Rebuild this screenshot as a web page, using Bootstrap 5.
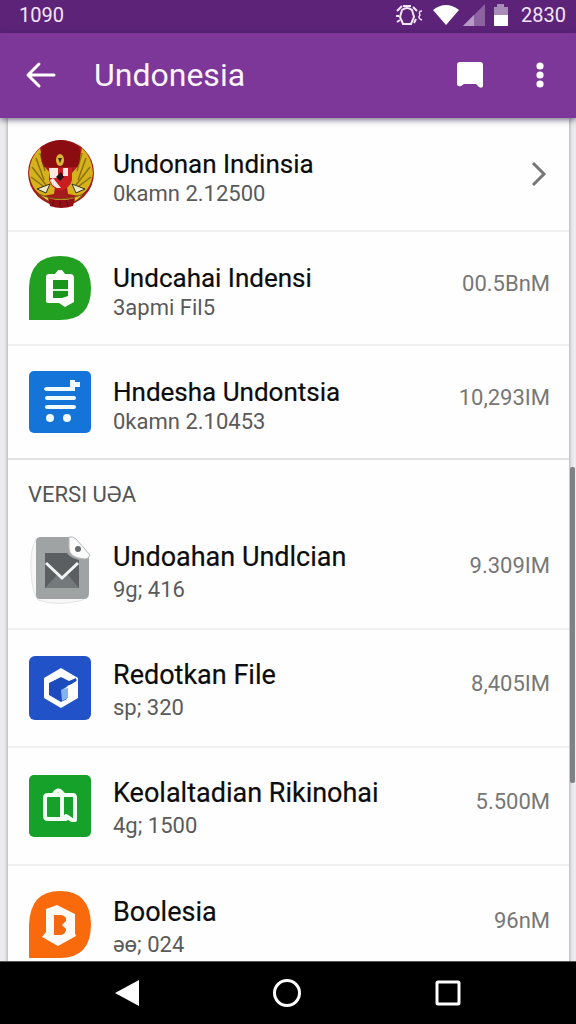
<!DOCTYPE html>
<html lang="id">
<head>
<meta charset="utf-8">
<meta name="viewport" content="width=device-width, initial-scale=1">
<title>Undonesia</title>
<link href="https://cdn.jsdelivr.net/npm/bootstrap@5.3.0/dist/css/bootstrap.min.css" rel="stylesheet">
<style>
  body { font-family: Roboto, "Liberation Sans", sans-serif; background: #ececee; color: #0c0c0c; }
  svg { display: block; flex: none; }
  .status-strip { background: #5c2379; height: 33px; font-size: 20px; line-height: 30px; color: #f3e6f8; padding: 0 10px 3px 19px; }
  .app-header { background: #7c3798; height: 85px; padding: 0 20px 2px 24px; box-shadow: 0 2px 6px rgba(30, 20, 60, .6); z-index: 2; }
  .app-header h1 { font-size: 32px; line-height: 40px; font-weight: 400; margin: 0 0 0 36px; color: #fbf3fd; }
  .bare-btn { background: none; border: 0; padding: 0; color: #fff; }
  .header-actions { gap: 40px; }
  .scroll-area { min-height: 0; padding: 0 7px 0 8px; }
  .sheet { background: #fefefe; box-shadow: 0 0 4px rgba(0, 0, 0, .4); min-height: 100%; }
  .file-row { display: flex; align-items: center; height: 114px; padding: 0 19px 0 20px; border-bottom: 2px solid #f0f0f0; color: inherit; text-decoration: none; }
  .group-end { border-bottom-color: #e2e2e2; }
  .lower .file-row { height: 118px; }
  .tile { width: 64px; margin-right: 21px; }
  .file-text { padding-top: 10px; }
  .file-name { font-size: 26px; line-height: 30px; -webkit-text-stroke: .2px; }
  .lower .file-name { font-size: 27px; }
  .file-note { font-size: 22px; line-height: 30px; color: #5a5a5a; }
  .lower .file-note { line-height: 36px; }
  .file-size { font-size: 22px; line-height: 30px; color: #777; padding-bottom: 8px; }
  .group-title { font-size: 22px; line-height: 30px; font-weight: 400; color: #555; margin: 0; padding: 20px 20px 2px; }
  .thumb { right: 1px; top: 41.4%; height: 37.5%; width: 5px; background: #808182; border-radius: 2px; }
  .soft-keys { background: #000; height: 63px; padding: 0 48px; border-top: 1px solid #555; z-index: 2; }
</style>
</head>
<body>
<div class="d-flex flex-column vh-100 overflow-hidden">
  <div class="status-strip d-flex align-items-center flex-shrink-0">
    <span class="me-auto">1090</span>
    <svg width="30" height="26" viewBox="0 0 30 26" fill="none" stroke="#f3e6f8" stroke-width="2"><path d="M7 8q5-4 10 0l2 7-3 7H8l-3-7z"/><path d="M2 9l5-5M18 5l4 4M1 14h3M2 20l3-2M8 4h8M19 21l2-4"/><path d="M27 9q-4 0-2 4-3 3 2 5" stroke-width="1.500"/></svg>
    <svg class="ms-2 me-1" width="26" height="22" viewBox="0 0 26 22"><path d="M0 6Q13-4 26 6L13 21z" fill="#fff"/></svg>
    <svg width="22" height="22" viewBox="0 0 22 22"><path d="M0 22L22 0v22z" fill="#8c62a1"/><path d="M0 22L11 11v11z" fill="#b79ac5"/></svg>
    <svg class="mx-2" width="16" height="22" viewBox="0 0 16 22"><path d="M4 0h7v3h4v8H1V3h3z" fill="#a98bb8"/><path d="M1 11h14v11H1z" fill="#fff"/></svg>
    <span class="ms-1">2830</span>
  </div>
  <header class="app-header d-flex align-items-center flex-shrink-0 position-relative">
    <button class="bare-btn" type="button" aria-label="Kembali"><svg width="34" height="32" viewBox="0 0 34 32" fill="none" stroke="#fff" stroke-width="3" stroke-linecap="round" stroke-linejoin="round"><path d="M30 16H4M15 5L4 16l11 11"/></svg></button>
    <h1 class="flex-grow-1">Undonesia</h1>
    <div class="header-actions d-flex align-items-center">
      <button class="bare-btn" type="button" aria-label="Pesan"><svg width="28" height="28" viewBox="0 0 28 28"><path d="M4 1h20q3 0 3 3v21q-1 3-4 1l-3-3H8l-3 2q-4 1-4-2V4q0-3 3-3z" fill="#fff"/></svg></button>
      <button class="bare-btn" type="button" aria-label="Menu"><svg width="32" height="28" viewBox="0 0 32 28" fill="#fff"><circle cx="16" cy="5" r="3.600"/><circle cx="16" cy="14" r="3.600"/><circle cx="16" cy="23" r="3.600"/></svg></button>
    </div>
  </header>

  <main class="scroll-area flex-grow-1 position-relative">
    <div class="sheet">
      <a class="file-row" href="#">
        <span class="tile"><svg width="66" height="70" viewBox="0 0 66 70">
          <ellipse cx="33" cy="34" rx="33" ry="33" fill="#a51a1a"/>
          <path d="M12 9Q2 18 1 34q2 17 14 23l11-2 2-14-12-14zM54 9q10 9 11 25-2 17-14 23l-11-2-2-14 12-14z" fill="#d5b21b"/>
          <path d="M8 19l8 22M4 28l14 18M3 38l16 12M58 19l-8 22M62 28L48 46M63 38L47 50M12 14l5 18M54 14l-5 18" stroke="#8d7110" stroke-width="1.500" fill="none"/>
          <path d="M14 8Q33-6 51 8q3 12-2 20H16Q11 19 14 8z" fill="#8b0d12"/>
          <ellipse cx="32" cy="21" rx="4" ry="6" fill="#d8b834"/><path d="M30 19h4l-2 5z" fill="#3b2a10"/>
          <path d="M21 29h23v12q-2 8-11 11-10-3-12-11z" fill="#c91d22"/>
          <path d="M21 29h9v10h-8zM35 29h5v8h-5zM25 39l8 10h-4q-6-3-7-8z" fill="#f7e9e2"/>
          <path d="M28 38l5-5 3 5-4 4z" fill="#251015"/>
          <path d="M9 50l13-5-4 9zM57 50l-13-5 4 9z" fill="#efe9c5" stroke="#3a3212"/>
          <path d="M10 55q23 10 46 0l-8 7H20z" fill="#e3c53c" stroke="#71500e"/>
          <path d="M20 59q13 4 27 0l-2 8q-12 4-23 0z" fill="#951016"/>
          <path d="M26 61l-2 6M32 62v6M38 61l2 6" stroke="#5c0a0d"/>
        </svg></span>
        <span class="file-text flex-grow-1"><span class="d-block file-name">Undonan Indinsia</span><span class="d-block file-note">0kamn 2.12500</span></span>
        <svg width="24" height="28" viewBox="0 0 24 28" fill="none" stroke="#777" stroke-width="3"><path d="M7 3l11 11L7 25"/></svg>
      </a>
      <a class="file-row" href="#">
        <span class="tile"><svg width="64" height="64" viewBox="0 0 64 64">
          <path d="M1 64V32Q2 0 32 0t31 32q0 32-31 32z" fill="#22a022"/>
          <path d="M21 18h6l3-4h4l3 4h5q4 0 4 4v24l-9 5-6-4H20q-2 0-2-2V21q0-3 3-3z" fill="#fff"/>
          <path d="M25 24h15v18H25z" fill="#18951a"/><path d="M25 34h15" stroke="#d9f4da" stroke-width="2"/><path d="M31 43l9-3v3z" fill="#fff"/>
        </svg></span>
        <span class="file-text flex-grow-1"><span class="d-block file-name">Undcahai Indensi</span><span class="d-block file-note">3apmi Fil5</span></span>
        <span class="file-size">00.5BnM</span>
      </a>
      <a class="file-row group-end" href="#">
        <span class="tile"><svg width="64" height="64" viewBox="0 0 64 64">
          <rect x="1" y="1" width="62" height="62" rx="5" fill="#1574d8"/>
          <path d="M18 17h24v-7h5v2h5v5h-5v4H18q-4-2 0-4z" fill="#effbff"/>
          <path d="M19 28h27M19 37h27" stroke="#effbff" stroke-width="4" stroke-linecap="round"/>
          <circle cx="22" cy="48" r="4" fill="#effbff"/><circle cx="39" cy="48" r="4" fill="#effbff"/>
        </svg></span>
        <span class="file-text flex-grow-1"><span class="d-block file-name">Hndesha Undontsia</span><span class="d-block file-note">0kamn 2.10453</span></span>
        <span class="file-size">10,293IM</span>
      </a>

      <section class="lower">
        <h2 class="group-title">VERSI UƏA</h2>
        <a class="file-row" href="#">
          <span class="tile"><svg width="64" height="70" viewBox="0 0 64 70">
            <path d="M8 4Q2 14 3 36q1 22 7 29 20 7 45 0l6-6" fill="#f7f7f7" stroke="#e3e4e4"/>
            <path d="M13 2h30l18 20v36q0 6-5 6H12q-4 0-4-4V6q0-4 5-4z" fill="#9fa3a4"/>
            <path d="M41 2q4-1 7 2l14 16q-1 4-5 4-16-1-16-11z" fill="#fafafa" stroke="#b4b7b8"/>
            <circle cx="50" cy="14" r="3" fill="#666b6d"/>
            <path d="M17 18h22q3 5 12 7v28H17z" fill="#5b5f61"/>
            <path d="M17 53l13-14 4 4 5-4 12 14z" fill="#74797b"/>
            <path d="M18 28l16 15 16-15" fill="none" stroke="#f2f4f4" stroke-width="3"/>
          </svg></span>
          <span class="file-text flex-grow-1"><span class="d-block file-name">Undoahan Undlcian</span><span class="d-block file-note">9g; 416</span></span>
          <span class="file-size">9.309IM</span>
        </a>
        <a class="file-row" href="#">
          <span class="tile"><svg width="64" height="64" viewBox="0 0 64 64">
            <rect x="1" y="0" width="62" height="64" rx="6" fill="#2252c8"/>
            <path d="M33 12l17 10v20L33 52 16 42V22z" fill="#fff"/>
            <path d="M21 27l12-6 8 4 7-3 1 4-10 4v13l-6 3-12-7z" fill="#1c4bbd"/>
            <path d="M33 34l7-4v12l-6 3z" fill="#83b4ef"/><path d="M36 33l14-9v12l-10 3v-7z" fill="#fff"/>
          </svg></span>
          <span class="file-text flex-grow-1"><span class="d-block file-name">Redotkan File</span><span class="d-block file-note">sp; 320</span></span>
          <span class="file-size">8,405IM</span>
        </a>
        <a class="file-row" href="#">
          <span class="tile"><svg width="64" height="64" viewBox="0 0 64 64">
            <rect x="1" y="1" width="62" height="62" rx="5" fill="#16a12b"/>
            <path d="M20 21h25q2 0 2 3v22l-3 0-6-4v3H20q-3 0-3-3V24q0-3 3-3zM34 21v22h4M26 20q4-7 9 0" fill="none" stroke="#f3fff4" stroke-width="4" stroke-linejoin="round"/>
          </svg></span>
          <span class="file-text flex-grow-1"><span class="d-block file-name">Keolaltadian Rikinohai</span><span class="d-block file-note">4g; 1500</span></span>
          <span class="file-size">5.500M</span>
        </a>
        <a class="file-row border-0" href="#">
          <span class="tile"><svg width="64" height="68" viewBox="0 0 64 68">
            <path d="M1 67V34Q2 0 32 0t31 33q0 34-31 34z" fill="#f96a0c"/>
            <path d="M18 18l11-4 18 9v19l1 3-18 10-16-9 4-5z" fill="#fffaf5"/>
            <path d="M26 24h7q6 1 5 6l-4 4 4 4q0 5-5 6h-7z" fill="#f4680f"/>
          </svg></span>
          <span class="file-text flex-grow-1"><span class="d-block file-name">Boolesia</span><span class="d-block file-note">əө; 024</span></span>
          <span class="file-size">96nM</span>
        </a>
      </section>
    </div>
    <div class="thumb position-absolute"></div>
  </main>

  <nav class="soft-keys d-flex align-items-center flex-shrink-0 position-relative" aria-label="Tombol sistem">
    <button class="bare-btn flex-fill d-flex justify-content-center" type="button" aria-label="Kembali"><svg width="24" height="26" viewBox="0 0 24 26"><path d="M0 13L24 0v26z" fill="#fff"/></svg></button>
    <button class="bare-btn flex-fill d-flex justify-content-center" type="button" aria-label="Beranda"><svg width="28" height="28" viewBox="0 0 28 28"><circle cx="14" cy="14" r="12.500" fill="none" stroke="#fff" stroke-width="3"/></svg></button>
    <button class="bare-btn flex-fill d-flex justify-content-center" type="button" aria-label="Aplikasi terkini"><svg width="26" height="26" viewBox="0 0 26 26"><rect x="2" y="2" width="22" height="22" rx="1" fill="none" stroke="#fff" stroke-width="3"/></svg></button>
  </nav>
</div>
<script src="https://cdn.jsdelivr.net/npm/bootstrap@5.3.0/dist/js/bootstrap.bundle.min.js"></script>
</body>
</html>
